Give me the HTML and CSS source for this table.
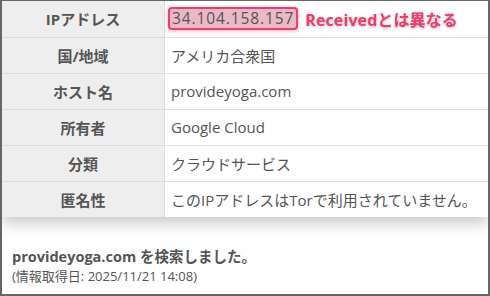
FILE: index.html
```html
<!DOCTYPE html>
<html lang="ja">
<head>
<meta charset="utf-8">
<link rel="stylesheet" href="styles.css">
</head>
<body>
<div class="frame">
  <table class="info">
    <tr>
      <th>IPアドレス</th>
      <td><span class="ip">34.104.158.157</span><span class="note">Receivedとは異なる</span></td>
    </tr>
    <tr><th>国/地域</th><td>アメリカ合衆国</td></tr>
    <tr><th>ホスト名</th><td>provideyoga.com</td></tr>
    <tr><th>所有者</th><td>Google Cloud</td></tr>
    <tr><th>分類</th><td>クラウドサービス</td></tr>
    <tr><th>匿名性</th><td>このIPアドレスはTorで利用されていません。</td></tr>
  </table>
  <div class="footer">
    <p class="searched">provideyoga.com を検索しました。</p>
    <p class="date">(情報取得日: 2025/11/21 14:08)</p>
  </div>
</div>
</body>
</html>
```

FILE: styles.css
```css
html, body {
  margin: 0;
  padding: 0;
  background: #fff;
}
body {
  font-family: "Open Sans", "Noto Sans CJK JP", sans-serif;
  color: #555;
}
.frame {
  width: 490px;
  height: 296px;
  box-sizing: border-box;
  border: 2px solid #666;
  border-top-width: 1px;
  overflow: hidden;
}
.info {
  width: 100%;
  border-collapse: collapse;
  box-shadow: 0 6px 14px rgba(0,0,0,0.22);
}
.info tr {
  height: 36px;
  border-bottom: 1px solid #ddd;
}
.info tr:last-child {
  border-bottom: none;
}
.info th {
  width: 162px;
  background: #eee;
  font-weight: bold;
  font-size: 15px;
  text-align: center;
  border-right: 1px solid #ddd;
  padding: 0;
  color: #555;
}
.info td {
  background: #fff;
  font-size: 15px;
  padding: 0 0 0 6px;
  color: #555;
}
.ip {
  display: inline-block;
  vertical-align: middle;
  background: #e9b9c7;
  border: 2px solid #ef3d6e;
  border-radius: 4px;
  padding: 0 2px;
  margin-left: -3px;
  line-height: 19px;
  font-size: 15.5px;
  letter-spacing: 0.9px;
  box-shadow: 0 1px 4px rgba(239,61,110,0.4);
}
.note {
  vertical-align: middle;
  margin-left: 7px;
  color: #f23a6c;
  font-size: 16px;
  font-weight: bold;
  letter-spacing: 0.1px;
  text-shadow: 0 1px 3px rgba(0,0,0,0.25);
}
.footer {
  padding: 31px 0 0 10px;
}
.searched {
  margin: 0;
  font-size: 14.5px;
  font-weight: bold;
  line-height: 18px;
}
.date {
  margin: 0;
  font-size: 13px;
  line-height: 20px;
}
```
